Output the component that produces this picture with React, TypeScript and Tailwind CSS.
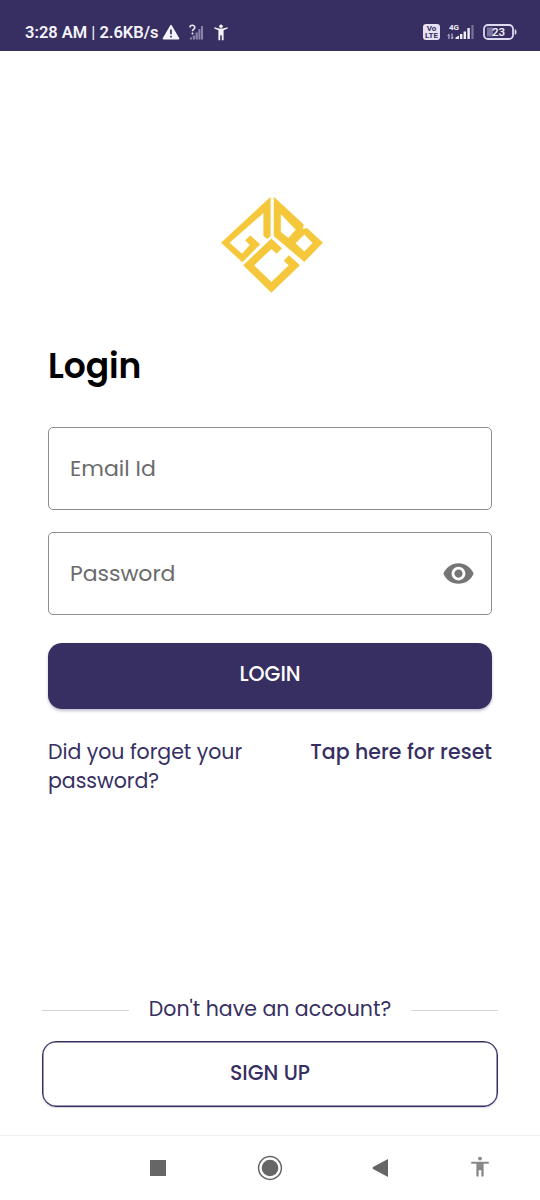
import React from 'react';
import { MdVisibility } from 'react-icons/md';

interface IconProps {
  className?: string;
}

function Logo() {
  return (
    <svg
      width="125"
      height="115"
      viewBox="0 0 375 345"
      fill="none"
      stroke="#f5c83c"
      strokeWidth="23"
      strokeMiterlimit="10"
    >
      <path
        d="M181 37V154L171 161L161 152V83L58 173L96 207L120 180L106 166L121 152L150 178L97 231L34 173Z"
        fill="#f5c83c"
        strokeWidth="1.5"
      />
      <path
        d="M192 37L280 118L278 133L291 130L338 173L283 230L192 153ZM212 86V141L235 160L258 134ZM283 148L256 175L283 200L308 174Z"
        fill="#f5c83c"
        fillRule="evenodd"
        strokeWidth="1.5"
      />
      <path d="M208 198L184 176L116 241L184 307L253 241L229 219" />
    </svg>
  );
}

function PersonIcon({ className }: IconProps) {
  return (
    <svg className={className} viewBox="0 0 20 22" fill="currentColor">
      <circle cx="10" cy="2.7" r="2" />
      <path d="M.8 6h18.4v2.2h-5.4V21.4h-2.4v-6.5H8.6v6.5H6.2V8.2H.8z" />
    </svg>
  );
}

function StatusPersonIcon() {
  return (
    <svg width="14" height="17" viewBox="0 0 14 17" fill="#f5f3fc">
      <circle cx="7" cy="2.2" r="1.8" />
      <path d="M.5 3.2 5 4.6h4l4.5-1.4.3 1.4-4.2 1.6v10H7.8v-5H6.2v5H4.4v-10L.2 4.6z" />
    </svg>
  );
}

function WarningIcon() {
  return (
    <svg width="18" height="17" viewBox="0 0 18 17">
      <path d="M9 1.6 16.6 14.6H1.4z" fill="#f5f3fc" stroke="#f5f3fc" strokeWidth="1.6" strokeLinejoin="round" />
      <path d="M9 5.5v4.8M9 11.7v1.8" stroke="#372f61" strokeWidth="1.7" />
    </svg>
  );
}

function NoSignalIcon() {
  return (
    <svg width="15" height="16" viewBox="0 0 15 16">
      <path d="M1 15.5v-2h2v2zM3.8 15.5v-4H6v4zM6.6 15.5V8.5h2.2v7zM9.4 15.5V5h2v10.5zM12 15.5V2h2v13.5z" fill="#8b84aa" />
      <path d="M1 3.4C1 .7 5.8.6 5.8 3.4 5.8 5.3 3.5 5 3.5 7.3" fill="none" stroke="#eeeaf8" strokeWidth="1.5" />
      <circle cx="3.5" cy="9.5" r="1" fill="#eeeaf8" />
    </svg>
  );
}

function SignalIcon() {
  return (
    <svg width="28" height="17" viewBox="0 0 28 17">
      <text x="2" y="7" fontSize="8" fontWeight="700" fill="#f0edf9" className="font-['Roboto',sans-serif]">4G</text>
      <path d="M2 16v-4.5M.8 12.7 2 11.2M5 10.5V16M5 15.5l1.2-1.6" fill="none" stroke="#d5d0e6" strokeWidth="1" />
      <path d="M8.5 16v-1.5l3.5-2V16zM13 16v-5h2.4v5zM16.6 16V8.5H19V16zM20.4 16V5h2.4v11z" fill="#f0edf9" />
      <path d="M24.4 2h2.2v14h-2.2z" fill="#7a7299" />
    </svg>
  );
}

function BatteryIcon() {
  return (
    <svg width="34" height="16" viewBox="0 0 34 16">
      <rect x="1" y="1" width="29" height="14" rx="4" fill="none" stroke="#dedaf0" strokeWidth="1.8" />
      <path d="M4 3.5h6v9H4z" fill="#7c749c" />
      <path d="M31.7 5.5h1c1 0 1 5 0 5h-1z" fill="#dedaf0" />
      <text x="15.5" y="12.2" fontSize="11.5" fontWeight="600" textAnchor="middle" fill="#f0edf9" className="font-['Roboto',sans-serif]">23</text>
    </svg>
  );
}

function StatusBar() {
  return (
    <header className="flex h-[51px] items-start bg-[#372f61] pt-6 pl-[25px] text-[#f5f3fc]">
      <span className="w-[137px] whitespace-nowrap font-['Roboto',sans-serif] text-[16.5px] leading-[18px] font-semibold tracking-[-0.02px]">
        3:28 AM <span className="font-normal">|</span> 2.6KB/s
      </span>
      <WarningIcon />
      <div className="ml-[9px]"><NoSignalIcon /></div>
      <div className="ml-[10px]"><StatusPersonIcon /></div>
      <div className="ml-[195px] flex h-4 w-[17px] flex-col items-center justify-center rounded-[3px] bg-[#e6e2f3] font-['Roboto',sans-serif] text-[8px] leading-[7px] font-bold text-[#372f61]">
        <span>Vo</span>
        <span>LTE</span>
      </div>
      <div className="-mt-px ml-[7px]"><SignalIcon /></div>
      <div className="ml-[8px]"><BatteryIcon /></div>
    </header>
  );
}

function NavBar() {
  return (
    <nav className="flex h-[65px] items-center border-t border-[#f0f0f0] pl-[150px] text-[#666]">
      <div className="size-4 bg-[#666]" />
      <svg className="ml-[91px]" width="26" height="26" viewBox="0 0 26 26">
        <circle cx="13" cy="13" r="11.4" fill="none" stroke="#666" strokeWidth="1.5" />
        <circle cx="13" cy="13" r="8.3" fill="#666" />
      </svg>
      <svg className="ml-[89px]" width="16" height="18" viewBox="0 0 16 18" fill="currentColor">
        <path d="M16 0v18L1 10Q0 9 1 8z" />
      </svg>
      <PersonIcon className="-mt-[3px] ml-[82px] h-[21px] w-5 text-[#888]" />
    </nav>
  );
}

export default function App() {
  return (
    <div className="flex h-[1200px] w-[540px] flex-col overflow-hidden bg-white font-['Poppins','Inter',sans-serif] text-[#372f61]">
      <StatusBar />

      <main className="flex flex-1 flex-col">
        <div className="mt-[134px] pl-[210px]">
          <Logo />
        </div>

        <form className="mt-[41px] flex flex-col px-12">
          <h1 className="h-[50px] text-[34.5px] leading-[50px] font-semibold tracking-[-0.1px] text-black">Login</h1>
          <div className="mt-[36px] flex h-[83px] items-center rounded-[5px] border border-[#8d8d8d] px-[21px]">
            <input
              className="w-full text-[22px] placeholder:text-[#6b6b6b] focus:outline-none"
              placeholder="Email Id"
              type="email"
            />
          </div>
          <div className="mt-[22px] flex h-[83px] items-center rounded-[5px] border border-[#8d8d8d] pr-4 pl-[21px]">
            <input
              className="w-full flex-1 text-[22px] tracking-[-0.05px] placeholder:text-[#6b6b6b] focus:outline-none"
              placeholder="Password"
              type="password"
            />
            <MdVisibility className="-mt-px size-[33px] text-[#757575]" />
          </div>
          <button
            type="button"
            className="mt-7 h-[66px] rounded-[14px] bg-[#372f61] pb-1 text-[20.5px] font-medium text-white shadow-[0_2px_3px_rgba(55,47,97,0.3)]"
          >
            LOGIN
          </button>
          <div className="mt-[29px] flex justify-between text-[20.5px] leading-[28.5px]">
            <p className="w-[220px] tracking-[-0.03px]">
              Did you forget your
              <br />
              password?
            </p>
            <a className="font-medium tracking-[0.03px] whitespace-nowrap">Tap here for reset</a>
          </div>
        </form>

        <section className="mt-auto mb-[28px] px-[42px]">
          <div className="flex h-[30px] items-center justify-between">
            <div className="mt-[4px] h-px w-[87px] bg-[#d3d3d3]" />
            <span className="pt-[3px] text-[20.5px] whitespace-nowrap">Don't have an account?</span>
            <div className="mt-[4px] h-px w-[87px] bg-[#d3d3d3]" />
          </div>
          <button
            type="button"
            className="mt-[18px] block h-[66px] w-full rounded-[14px] border border-[#372f61] pb-px text-[20.5px] font-medium shadow-[inset_0_0_0_0.5px_#372f61,0_1px_1px_rgba(55,47,97,0.2)]"
          >
            SIGN UP
          </button>
        </section>
      </main>

      <NavBar />
    </div>
  );
}
